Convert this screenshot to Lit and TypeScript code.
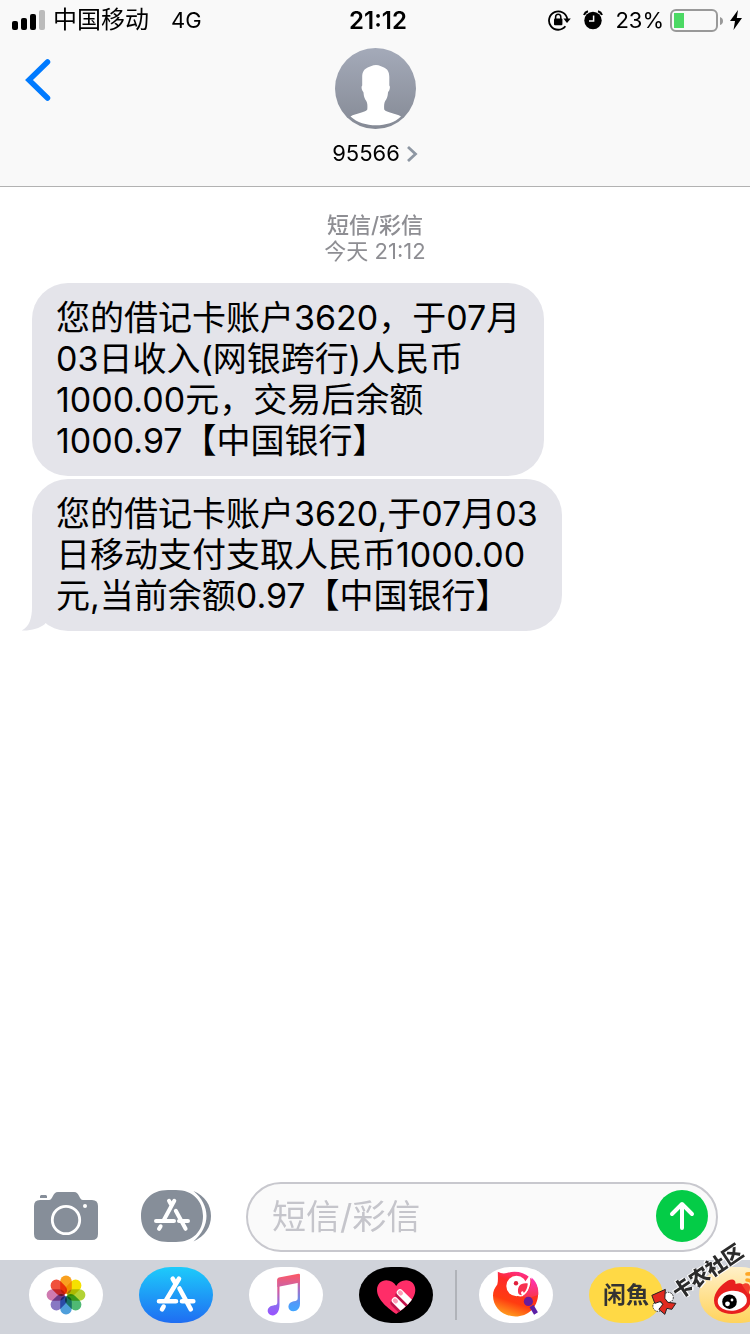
import { LitElement, html, svg, css } from "lit";
import { customElement, property } from "lit/decorators.js";

const storeGlyph = (big: boolean) =>
  big
    ? svg`<path d="M40 11.7 26.6 34M33.7 11.7l3 5M40.5 21.5 51.8 42.3M20 34.3h17M43 34.3h11.3M24.6 39.6 23 42.3" fill="none" stroke="#fff" stroke-width="4.6" stroke-linecap="round"/>`
    : svg`<path d="M33.3 10.8 22.6 30.5M28 10.8l2.6 4.6M34.8 20.8 44.6 38.8M15 31h18M38 31h9M19.6 36.3 18 38.8" fill="none" stroke="#fff" stroke-width="4" stroke-linecap="round"/>`;

const petals = ["#f9a01f", "#f5e100", "#b2d235", "#4fb974", "#4f9fdb", "#8878c3", "#cf7ab0", "#f0503c"];

@customElement("status-bar")
export class StatusBar extends LitElement {
  static styles = css`
    :host {
      display: grid;
      grid-template-columns: 1fr auto 1fr;
      align-items: center;
      height: 40px;
      padding: 0 8px 0 12px;
      font-size: 22px;
    }
    .side { display: flex; align-items: center; }
    .end { justify-content: flex-end; }
    .bars { margin-right: 8px; }
    .carrier { font-size: 24px; line-height: 24px; margin-right: 22px; }
    .time { font-size: 24px; font-weight: 600; padding-left: 2px; }
    .lock { margin-right: 12px; }
    .alarm { margin-right: 12px; }
    .battery { margin: 0 6px; }
    svg { display: block; flex: none; }
  `;
  render() {
    return html`
      <div class="side">
        <svg class="bars" width="33" height="20">
          <rect y="11" width="6" height="9" rx="2" />
          <rect x="9" y="8" width="6" height="12" rx="2" />
          <rect x="18" y="4" width="6" height="16" rx="2" />
          <rect x="27" width="6" height="20" rx="2" fill="#bbb" />
        </svg>
        <span class="carrier">中国移动</span><span>4G</span>
      </div>
      <div class="time">21:12</div>
      <div class="side end">
        <svg class="lock" width="23" height="22" viewBox="0 0 23 22">
          <path d="M17.4 17.300A9.2 9.2 0 1 1 19.300 10" fill="none" stroke="#000" stroke-width="1.8" />
          <path d="M15.4 9.6h7.4L19 14z" />
          <rect x="6" y="9.5" width="8.4" height="6.800" rx="1" />
          <path d="M7.6 10V8a2.6 2.8 0 0 1 5.2 0v2" fill="none" stroke="#000" stroke-width="1.5" />
        </svg>
        <svg class="alarm" width="20" height="20" viewBox="0 0 20 20">
          <circle cx="10" cy="10.5" r="8.7" />
          <path d="M1 5A6 6 0 0 1 5 1.200M19 5A6 6 0 0 0 15 1.200" fill="none" stroke="#000" stroke-width="2" />
          <path d="M10.600 5.500v5.600H6" fill="none" stroke="#f9f9f9" stroke-width="1.5" />
        </svg>
        <span>23%</span>
        <svg class="battery" width="54" height="24" viewBox="0 0 54 24">
          <rect x="1" y="2" width="46" height="21" rx="5" fill="none" stroke="#999" stroke-width="2" />
          <rect x="4" y="5" width="10" height="15" fill="#4cd964" />
          <path d="M50 9q3 1 3 4t-3 4z" fill="#999" />
        </svg>
        <svg width="12" height="20" viewBox="0 0 12 20"><path d="M8 0 0 11h5L3.500 20 12 8H6.800z" /></svg>
      </div>
    `;
  }
}

@customElement("chat-header")
export class ChatHeader extends LitElement {
  static styles = css`
    :host {
      display: grid;
      grid-template-columns: 1fr auto 1fr;
      align-items: start;
      height: 146px;
      padding: 8px 24px 0;
      box-sizing: border-box;
    }
    button { font: inherit; color: inherit; border: 0; padding: 0; background: none; }
    svg { display: block; }
    .back { justify-self: start; padding-top: 10px; }
    .contact { display: flex; flex-direction: column; align-items: center; gap: 10px; }
    .number { display: flex; align-items: center; gap: 6px; font-size: 22px; line-height: 28px; }
  `;
  render() {
    return html`
      <button class="back" aria-label="返回">
        <svg width="28" height="44" viewBox="0 0 28 44">
          <path d="M23.500 4 5 22l18.500 18" fill="none" stroke="#007aff" stroke-width="5.500" stroke-linecap="round" />
        </svg>
      </button>
      <button class="contact">
        <svg width="81" height="81" viewBox="0 0 81 81">
          <defs>
            <linearGradient id="a" x2="0" y2="1">
              <stop stop-color="#a4aab9" /><stop offset="1" stop-color="#858a95" />
            </linearGradient>
          </defs>
          <circle cx="40.500" cy="40.500" r="40.500" fill="url(#a)" />
          <path fill="#fff" d="M41 17c3.500 0 5.500 1.600 8 2.500 3.500 1.500 5.300 4.500 5.300 9.500v8.500c1 .6.7 3-.1 5-.5 1-1 1.200-1.200 2-.3 4-1 6-2.800 8.500-1.200 2-1.200 5-1 8.500 2.500 3.500 11.500 3.500 16.800 7C60 74.500 50.500 77.300 41 77.300S22 74.500 15.500 68.500c5.300-3.500 14.300-3.500 16.800-7 .3-3.500.2-6.500-1-8.500-1.800-2.500-2.500-4.500-2.800-8.500-.2-.8-.8-1-1.200-2-.9-2-1-4.400-.1-5V29c0-5 2-8 5.500-9.500 2.500-1 4.800-2.500 8.300-2.500z" />
        </svg>
        <span class="number">95566
          <svg width="12" height="18" viewBox="0 0 12 18">
            <path d="M2 3l7.500 7L2 17" fill="none" stroke="#8e97a3" stroke-width="2.800" />
          </svg>
        </span>
      </button>
    `;
  }
}

@customElement("chat-bubble")
export class ChatBubble extends LitElement {
  @property() text = "";
  @property({ type: Boolean }) tail = false;
  static styles = css`
    :host { display: block; position: relative; }
    .body {
      margin: 0;
      padding: 14px 24px 15px;
      border-radius: 36px;
      background: #e4e4ea;
      font-size: 34px;
      line-height: 41px;
      white-space: pre-line;
    }
    .tail { position: absolute; left: -10px; bottom: 0; }
  `;
  render() {
    return html`
      <p class="body">${this.text}</p>
      ${this.tail
        ? html`<svg class="tail" width="44" height="40" viewBox="0 0 44 40">
            <path d="M10 0v16c0 12-3 20-10.500 23.500C9 40 17 37.500 23 33L30 20z" fill="#e4e4ea" />
          </svg>`
        : ""}
    `;
  }
}

@customElement("compose-bar")
export class ComposeBar extends LitElement {
  static styles = css`
    :host { display: flex; align-items: center; padding: 8px 32px 8px 34px; }
    svg { display: block; }
    button { border: 0; padding: 0 0 2px; background: none; flex: none; }
    .camera { margin-right: 43px; }
    .apps { margin-right: 35px; }
    .field {
      flex: 1;
      display: flex;
      align-items: center;
      min-width: 0;
      height: 70px;
      box-sizing: border-box;
      padding: 0 8px 0 24px;
      border: 2px solid #c8c8ce;
      border-radius: 35px;
      background: #fafafa;
    }
    input {
      flex: 1;
      min-width: 0;
      border: 0;
      padding: 0 0 2px;
      outline: 0;
      background: none;
      font: inherit;
      font-size: 34px;
      line-height: 41px;
    }
    input::placeholder { color: #c5c5cb; opacity: 1; }
  `;
  render() {
    return html`
      <button class="camera" aria-label="相机">
        <svg width="64" height="48" viewBox="0 0 64 48">
          <path fill="#868e99" d="M6 8h9c4 0 3.500-8 9-8h16c5.500 0 5 8 9 8h9q6 0 6 6v28q0 6-6 6H6q-6 0-6-6V14q0-6 6-6z" />
          <path fill="#868e99" d="M7 3h5l1 1v2H6V4z" />
          <circle cx="32" cy="28" r="13.700" fill="none" stroke="#fff" stroke-width="2.800" />
          <circle cx="51" cy="14" r="2" fill="#fff" />
        </svg>
      </button>
      <button class="apps" aria-label="应用">
        <svg width="70" height="52" viewBox="0 0 70 52">
          <path fill="#868e99" d="M27 0h8c17 0 27 11 27 26S52 52 35 52h-8C10 52 0 41 0 26S10 0 27 0zM52.500 1C64 6 70 15 70 26s-6 20-17.500 25.500C61 44 65.500 35 65.500 26S61 8 52.500 1z" />
          ${storeGlyph(false)}
        </svg>
      </button>
      <div class="field">
        <input type="text" aria-label="短信/彩信" placeholder="短信/彩信" />
        <button aria-label="发送">
          <svg width="52" height="52" viewBox="0 0 52 52">
            <circle cx="26" cy="26" r="26" fill="#04cc47" />
            <path d="M26 38V15M16 24l10-10 10 10" fill="none" stroke="#fff" stroke-width="4" stroke-linecap="round" stroke-linejoin="round" />
          </svg>
        </button>
      </div>
    `;
  }
}

@customElement("app-strip")
export class AppStrip extends LitElement {
  static styles = css`
    :host {
      display: flex;
      gap: 36px;
      height: 74px;
      box-sizing: border-box;
      padding: 7px 0 0 29px;
      overflow: hidden;
      background: #d0d3da;
    }
    .app {
      flex: none;
      display: grid;
      place-items: center;
      width: 74px;
      height: 56px;
      padding: 0;
      border: 0;
      border-radius: 32px / 28px;
      overflow: hidden;
      background: #fff;
      font: inherit;
    }
    .app svg { display: block; }
    .black { background: #000; }
    .blue { background: linear-gradient(#1dcbfb, #1f6df2); }
    .yellow { background: #ffd945; color: #333; font-size: 23px; font-weight: 700; line-height: 28px; }
    .cream { background: linear-gradient(#fff0c8, #ffd35c); }
    .divider { flex: none; width: 2px; height: 50px; margin: 3px -14px 0; background: #b0b3b9; }
    .petal { mix-blend-mode: multiply; }
  `;
  render() {
    return html`
      <button class="app" aria-label="照片">
        <svg width="74" height="56" viewBox="0 0 74 56">
          ${petals.map(
            (c, i) => svg`<rect class="petal" x="31.2" y="8.600" width="11.600" height="18.500" rx="5.800" fill=${c} transform=${`rotate(${i * 45} 37 28)`}/>`
          )}
          <circle cx="37" cy="28" r="1.300" fill="#fff" />
        </svg>
      </button>
      <button class="app blue" aria-label="App Store">
        <svg width="74" height="56" viewBox="0 0 74 56">${storeGlyph(true)}</svg>
      </button>
      <button class="app" aria-label="音乐">
        <svg width="74" height="56" viewBox="0 0 74 56">
          <defs>
            <linearGradient id="m" x1="0" y1="0" x2="0" y2="1">
              <stop stop-color="#ff5863" /><stop offset=".3" stop-color="#d45c9c" />
              <stop offset=".7" stop-color="#8b6cf0" /><stop offset="1" stop-color="#9a52ff" />
            </linearGradient>
            <linearGradient id="n" x1="0" y1="0" x2="0" y2="1">
              <stop stop-color="#ff5863" /><stop offset=".35" stop-color="#b06cc0" />
              <stop offset=".8" stop-color="#4e9bfa" /><stop offset="1" stop-color="#42a5ff" />
            </linearGradient>
            <linearGradient id="o" x1="0" y1="0" x2="0" y2="1">
              <stop stop-color="#ff5863" /><stop offset="1" stop-color="#cc62a6" />
            </linearGradient>
          </defs>
          <path fill="url(#m)" d="M28.300 12.500h2.200v25.300c0 6.600-2.800 10.600-6.800 10.600-3 0-5-2-5-4.600 0-3 2.500-4.800 5.500-5.300 3-.5 4.100-.8 4.100-3.300z" />
          <path fill="url(#n)" d="M48.700 8H51v28.500c0 4.600-2.600 7.700-6.600 7.700-3 0-5-2-5-4.500 0-3 2.300-4.800 5.300-5.400 3-.5 4-.9 4-3.300z" />
          <path fill="url(#o)" d="M28.300 12.500q0-1.500 1.500-1.900L49.500 6.800Q51 6.600 51 8v7.500L28.300 20z" />
        </svg>
      </button>
      <button class="app black" aria-label="Digital Touch">
        <svg width="74" height="56" viewBox="0 0 74 56">
          <defs>
            <clipPath id="h"><path d="M37.200 47C30 42 18 33 18 23c0-6 4.300-9.700 9.300-9.700 4.300 0 7.700 2.200 9.900 5.700 2.200-3.500 5.600-5.700 9.900-5.700 5 0 9.200 3.700 9.200 9.700 0 10-12 19-19.100 24z" /></clipPath>
          </defs>
          <g clip-path="url(#h)">
            <rect width="74" height="56" fill="#ff2d68" />
            <path d="M40 28l14 14M35 36l14 14" stroke="#c0134a" stroke-width="7" stroke-linecap="round" />
            <path d="M41 25.500l14 14M36 33.500l14 14" stroke="#fff" stroke-width="6.600" stroke-linecap="round" />
            <path d="M41 25.500l.8.800M36 33.500l.8.800" stroke="#ff9db8" stroke-width="4.400" stroke-linecap="round" />
          </g>
        </svg>
      </button>
      <div class="divider"></div>
      <button class="app" aria-label="唱吧">
        <svg width="74" height="56" viewBox="0 0 74 56">
          <defs>
            <linearGradient id="b" x1=".75" y1="0" x2=".4" y2="1">
              <stop stop-color="#ff2fa0" /><stop offset=".3" stop-color="#fd2a28" />
              <stop offset=".7" stop-color="#ff3c10" /><stop offset="1" stop-color="#ff9a1e" />
            </linearGradient>
            <linearGradient id="f" x2="0" y2="1"><stop stop-color="#ff2fc0" /><stop offset="1" stop-color="#f8374a" /></linearGradient>
          </defs>
          <path fill="url(#b)" d="M18.800 4.800c3 1.600 6 2 9 1.200 8-2.600 17-1 23 4.500l6 6c1.500 3.500 2.500 7 2.300 11C58.600 40.500 49 49.500 36.500 49.500S14 40.500 14 28.500c0-4 1.500-7.500 4.300-11 1-4 .5-8 .5-12.700z" />
          <path fill="#fff" d="M49 3c3 2.500 5 5 5.500 8l6 5V2z" />
          <circle cx="37.500" cy="19" r="10.200" fill="#fff" />
          <path d="M50.500 8.500c2.500 7-.5 17-7 20.800-3 .5-6.500-.3-8-2.300l9-10z" fill="#fff" />
          <path fill="url(#f)" d="M52.500 10.500c5 4 7.500 11 6.700 17.500L50 31l-6.500-1.700c6.500-4 9.500-11.300 9-18.800z" />
          <path d="M39.200 26c-1-6 1.800-10.500 9.600-9.500-.3 4.300-1.600 7.500-4 9.500-.2-1.800-1.600-2.300-2.400-1.300s-.2 2.500.8 3.500c-1.800 0-3.500-.7-4-2.200z" fill="#f8314f" />
          <circle cx="37" cy="16.300" r="2.200" fill="#e0203c" />
          <path d="M52.500 39l4.500 7.500" stroke="#5b1fa6" stroke-width="4.500" />
          <circle cx="49.400" cy="34.400" r="4.600" fill="#6a1c9c" />
        </svg>
      </button>
      <button class="app yellow">闲魚</button>
      <button class="app cream" aria-label="微博">
        <svg width="74" height="56" viewBox="0 0 74 56">
          <path fill="#e8201f" d="M15 33.500c0-8 7-16 14-20 4-2 8-1.500 7.500 3.500 4-1.500 8-1 8.500 3 3-2.500 6-1 5.500 2-.2 2-.8 3-.5 4 2 2.500 2.500 5 2 8-1.500 8-9 13-19 13S15 42 15 33.500z" />
          <path fill="#f5402c" d="M43 18c3-3 8-2 8 2 0 3-1 5-2 7z" />
          <ellipse cx="33.300" cy="33.700" rx="14.600" ry="10" fill="#fff" transform="rotate(-5 33.300 33.700)" />
          <circle cx="30.500" cy="34.700" r="7.300" />
          <circle cx="28.500" cy="36.800" r="2.400" fill="#fff" /><circle cx="33" cy="33" r="1.400" fill="#fff" />
          <path d="M48 7c8-1 13 5 12 12M48 13c4 0 6 3 6 6" fill="none" stroke="#ffa726" stroke-width="3.600" stroke-linecap="round" />
        </svg>
      </button>
    `;
  }
}

@customElement("app-root")
export class AppRoot extends LitElement {
  static styles = css`
    :host {
      display: flex;
      flex-direction: column;
      position: relative;
      min-height: 100vh;
      overflow: hidden;
      background: #fff;
      color: #000;
      font-family: Inter, "Noto Sans CJK SC", sans-serif;
    }
    header { background: #f9f9f9; border-bottom: 1px solid #b2b2b2; }
    main { flex: 1; display: flex; flex-direction: column; }
    .stamp {
      margin: 0;
      padding: 25px 0 19px;
      text-align: center;
      font-size: 22px;
      line-height: 26px;
      color: #8e8e93;
    }
    .kind { display: block; font-weight: 500; }
    .thread { display: flex; flex-direction: column; align-items: flex-start; gap: 3px; padding: 0 32px; }
    .mark {
      position: absolute;
      right: 0;
      bottom: 42px;
      display: flex;
      align-items: center;
      gap: 0;
      transform: rotate(-34deg);
      font-size: 20px;
      line-height: 24px;
      font-weight: 900;
      color: #2b2b2b;
      text-shadow: 0 0 1px #fff, 1px 1px 0 #fff, -1px -1px 0 #fff;
      pointer-events: none;
    }
  `;
  render() {
    return html`
      <header>
        <status-bar></status-bar>
        <chat-header></chat-header>
      </header>
      <main>
        <p class="stamp"><span class="kind">短信/彩信</span>今天 21:12</p>
        <div class="thread">
          <chat-bubble
            .text=${"您的借记卡账户3620，于07月\n03日收入(网银跨行)人民币\n1000.00元，交易后余额\n1000.97【中国银行】"}
          ></chat-bubble>
          <chat-bubble
            tail
            .text=${"您的借记卡账户3620,于07月03\n日移动支付支取人民币1000.00\n元,当前余额0.97【中国银行】"}
          ></chat-bubble>
        </div>
      </main>
      <compose-bar></compose-bar>
      <app-strip></app-strip>
      <div class="mark">
        <svg width="26" height="26" viewBox="0 0 26 26">
          <g transform="rotate(34 13 13)" stroke="#222">
            <circle cx="17.500" cy="9" r="5" fill="#fff" stroke-dasharray="1.500 1" />
            <circle cx="7" cy="18" r="5" fill="#fff" stroke-dasharray="1.500 1" />
            <path d="M1 7 14.500 1 14 10l3 4 8 1-4 6-5-1-2 6-6-5 4-5-2-3-6 2z" fill="#e02a20" />
          </g>
        </svg>
        <span>卡农社区</span>
      </div>
    `;
  }
}
